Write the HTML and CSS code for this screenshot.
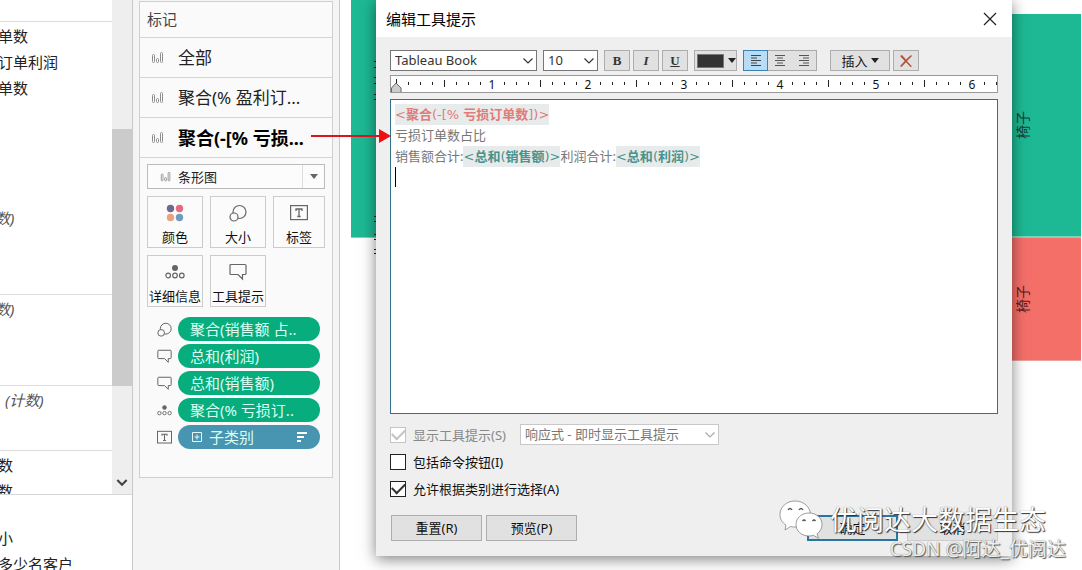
FILE: index.html
```html
<!DOCTYPE html>
<html lang="zh-CN">
<head>
<meta charset="utf-8">
<title>编辑工具提示</title>
<link rel="stylesheet" href="styles.css">
</head>
<body>
<svg class="defs" aria-hidden="true">
  <symbol id="bars" viewBox="0 0 14 14"><g fill="#fff" stroke="#8c8c8c"><rect x="1.500" y="3.500" width="2" height="8" rx="1"/><rect x="5.500" y="7.500" width="2" height="4" rx="1"/><rect x="9.500" y="1.500" width="2" height="10" rx="1"/></g></symbol>
  <symbol id="size" viewBox="0 0 18 18"><g fill="#fafafa" stroke="#666" stroke-width="1.200"><circle cx="10.500" cy="8" r="6.500"/><circle cx="5" cy="13" r="4"/></g></symbol>
  <symbol id="label" viewBox="0 0 18 18"><rect x=".6" y="1.600" width="16.800" height="14" fill="none" stroke="#666" stroke-width="1.200"/><path d="M6 7V5h6v2M9 5v7.500M7.300 12.500h3.400" fill="none" stroke="#666" stroke-width="1.300"/></symbol>
  <symbol id="detail" viewBox="0 0 20 18"><circle cx="10" cy="5" r="3" fill="#666"/><g fill="none" stroke="#666" stroke-width="1.200"><circle cx="3.200" cy="12.500" r="2.300"/><circle cx="10" cy="12.500" r="2.300"/><circle cx="16.800" cy="12.500" r="2.300"/></g></symbol>
  <symbol id="tip" viewBox="0 0 18 18"><path d="M2 1.500h14q1 0 1 1v8q0 1-1 1h-2.500v4.500l-4.500-4.500H2q-1 0-1-1v-8q0-1 1-1z" fill="none" stroke="#666" stroke-width="1.200"/></symbol>
  <symbol id="chev" viewBox="0 0 12 12"><path d="M1.500 3.500 6 8l4.500-4.500" fill="none" stroke="currentColor" stroke-width="1.200"/></symbol>
</svg>
<div class="app">
  <aside class="data">
    <div class="scroll">
      <div class="fields">
        <div class="group g-top"></div>
        <div class="group g-main"><p>单数</p><p>订单利润</p><p>单数</p><p class="calc gap">数)</p></div>
        <div class="group g-mid"><p class="calc">数)</p></div>
        <div class="group g-low"><p class="calc indent">(计数)</p></div>
        <div class="group g-end"><p>数</p><p>数</p></div>
      </div>
      <div class="bar"><div class="thumb"></div><svg width="14" height="14" viewBox="0 0 12 12"><path d="M2 3.500 6 7.500l4-4" fill="none" stroke="#444" stroke-width="1.800"/></svg></div>
    </div>
    <div class="params"><p>小</p><p>多少名客户</p></div>
  </aside>

  <section class="shelf">
    <div class="card">
      <h2>标记</h2>
      <div class="layer"><svg><use href="#bars"/></svg><span>全部</span></div>
      <div class="layer"><svg><use href="#bars"/></svg><span>聚合(% 盈利订...</span></div>
      <div class="layer current"><svg><use href="#bars"/></svg><span>聚合(-[% 亏损...</span></div>
      <div class="marks">
        <button class="type"><svg class="mini"><use href="#bars"/></svg><span>条形图</span><i class="drop"><b class="tri"></b></i></button>
        <div class="tiles">
          <button><svg viewBox="0 0 20 18"><circle cx="5.500" cy="4.500" r="3.700" fill="#70688f"/><circle cx="14.500" cy="4.500" r="3.700" fill="#e46a80"/><circle cx="5.500" cy="13.500" r="3.700" fill="#eca27c"/><circle cx="14.500" cy="13.500" r="3.700" fill="#6d9db8"/></svg>颜色</button>
          <button><svg><use href="#size"/></svg>大小</button>
          <button><svg><use href="#label"/></svg>标签</button>
          <button><svg><use href="#detail"/></svg>详细信息</button>
          <button><svg><use href="#tip"/></svg>工具提示</button>
        </div>
        <div class="pills">
          <div><svg><use href="#size"/></svg><button>聚合(销售额 占..</button></div>
          <div><svg><use href="#tip"/></svg><button>总和(利润)</button></div>
          <div><svg><use href="#tip"/></svg><button>总和(销售额)</button></div>
          <div><svg><use href="#detail"/></svg><button>聚合(% 亏损订..</button></div>
          <div><svg><use href="#label"/></svg><button class="dim"><svg width="10" height="10" viewBox="0 0 10 10"><path d="M.5.5h9v9h-9zM5 2.500v5M2.500 5h5" fill="none" stroke="#e8f6fb"/></svg><span>子类别</span><svg class="sort" width="12" height="12" viewBox="0 0 12 12"><path d="M1 2h10M1 6h7M1 10h4" stroke="#fff" stroke-width="2"/></svg></button></div>
        </div>
      </div>
    </div>
  </section>

  <main class="chart">
    <div class="column left"><div class="good"><svg width="3" height="196" viewBox="0 0 3 196"><path d="M1.500 1v1M1.500 7v1M1.500 17v1M1.500 23v1M1.500 34v1M1.500 39v1M1.500 156v1M1.500 161v1M1.500 174v1M1.500 179v1M1.500 189v1M1.500 193v1" stroke="#222" stroke-width="3"/></svg></div></div>
    <div class="column right"><div class="good"><span>椅子</span></div><div class="bad"><span>椅子</span></div></div>
  </main>
</div>

<div class="dialog" role="dialog" aria-labelledby="title">
  <header><h1 id="title">编辑工具提示</h1><button class="close" aria-label="关闭"><svg width="14" height="14" viewBox="0 0 14 14"><path d="m1 1 12 12M13 1 1 13" stroke="#222" stroke-width="1.200"/></svg></button></header>
  <div class="content">
    <div class="tools">
      <div class="pick font"><select aria-label="字体"><option>Tableau Book</option></select><svg><use href="#chev"/></svg></div>
      <div class="pick points"><select aria-label="字号"><option>10</option></select><svg><use href="#chev"/></svg></div>
      <div class="styles"><button class="serif">B</button><button class="serif it">I</button><button class="serif un">U</button></div>
      <button class="color" aria-label="颜色"><i></i><b class="tri"></b></button>
      <div class="align">
        <button class="on" aria-label="左对齐"><svg width="12" height="11" viewBox="0 0 12 11"><path d="M1 .5h10M1 3h6M1 5.500h10M1 8h6M1 10.500h10" stroke="#444"/></svg></button>
        <button aria-label="居中"><svg width="12" height="11" viewBox="0 0 12 11"><path d="M1 .5h10M3 3h6M1 5.500h10M3 8h6M1 10.500h10" stroke="#555"/></svg></button>
        <button aria-label="右对齐"><svg width="12" height="11" viewBox="0 0 12 11"><path d="M1 .5h10M5 3h6M1 5.500h10M5 8h6M1 10.500h10" stroke="#555"/></svg></button>
      </div>
      <button class="insert">插入 <b class="tri"></b></button>
      <button class="clear" aria-label="清除"><svg width="14" height="14" viewBox="0 0 14 14"><path d="M1 2 3 1l4 4.500L12 1l1 1-5 5 5 5.500-1.500.5L7 8.300 2.500 13 1 12l4.700-5z" fill="#b5543f"/></svg></button>
    </div>
    <svg class="ruler" aria-hidden="true">
      <defs><pattern id="ticks" x="5" width="96" height="18" patternUnits="userSpaceOnUse"><path d="M12.500 6v3M24.500 6v3M36.500 6v3M60.500 6v3M72.500 6v3M84.500 6v3M48.500 4v7" stroke="#222"/></pattern></defs>
      <rect x="5" width="100%" height="17" fill="url(#ticks)"/>
      <path d="M5.500 3v4" stroke="#222"/>
      <g text-anchor="middle"><text x="101" y="13">1</text><text x="197" y="13">2</text><text x="293" y="13">3</text><text x="389" y="13">4</text><text x="485" y="13">5</text><text x="581" y="13">6</text></g>
      <path d="M.5 17.500V12L5 7l5 5v5.500z" fill="#ccc" stroke="#666"/>
    </svg>
    <div class="editor" role="textbox" contenteditable="true" aria-label="工具提示内容">
      <p><span class="field red">&lt;<b>聚合</b>(-[% <b>亏损订单数</b>])&gt;</span></p>
      <p>亏损订单数占比</p>
      <p>销售额合计:<span class="field teal">&lt;<b>总和</b>(<b>销售额</b>)&gt;</span>利润合计:<span class="field teal">&lt;<b>总和</b>(<b>利润</b>)&gt;</span></p>
      <p class="caret"></p>
    </div>
    <div class="options">
      <div class="line"><label class="off"><input type="checkbox" checked disabled>显示工具提示(S)</label><div class="pick mode"><select aria-label="显示方式" disabled><option>响应式 - 即时显示工具提示</option></select><svg><use href="#chev"/></svg></div></div>
      <label><input type="checkbox">包括命令按钮(I)</label>
      <label><input type="checkbox" checked>允许根据类别进行选择(A)</label>
    </div>
    <footer><button>重置(R)</button><button>预览(P)</button><button class="ok">确定</button><button class="cancel">取消</button></footer>
  </div>
</div>

<svg class="arrow" width="80" height="16" viewBox="0 0 80 16"><path d="M0 8h70" stroke="#d9161c" stroke-width="2"/><path d="M68 1 80 8 68 15z" fill="#ee1111"/></svg>

<div class="mark">
  <svg width="44" height="40" viewBox="0 0 44 40"><g fill="#fff" stroke="#777" stroke-width=".7"><path d="M16 1C7.500 1 1 7 1 14.500c0 4.500 2 8 6 10.500l-1 5 5.500-3.500c1.500.5 3 .5 4.500.5 9 0 15.500-5.500 15.500-12.500S25 1 16 1z"/><path d="M30 13c-7.500 0-13 5-13 11.500S22.500 36 30 36c1.500 0 3-.2 4.500-.7l5 3-1.500-4.500c3-2 5-5.500 5-9.300C43 18 37.500 13 30 13z"/></g><g fill="none" stroke="#555" stroke-width="1.300"><path d="M9 10q2-3 4 0M20 10q2-3 4 0M23.500 21q1.500-2 3 0M33.500 21q1.500-2 3 0"/></g></svg>
  <span>优阅达大数据生态</span>
</div>
<div class="credit">CSDN @阿达_优阅达</div>
</body>
</html>
```
FILE: styles.css
```css
* { box-sizing: border-box; }
body, p, h1, h2 { margin: 0; font-weight: 400; }
body {
  background: #fff;
  color: #222;
  font: 15px/26px "Noto Sans", "Noto Sans CJK SC", sans-serif;
  overflow: hidden;
  position: relative;
  min-height: 100vh;
}
button, select, input { font: inherit; color: inherit; margin: 0; padding: 0; }
button { border: 1px solid #adadad; background: #e1e1e1; white-space: nowrap; }
svg { display: block; flex: none; }
.defs { position: absolute; width: 0; height: 0; }
.tri { border: 4px solid transparent; border-top: 5px solid #222; border-bottom: 0; width: 0; height: 0; flex: none; }

.app { display: flex; height: 100vh; }

.data { width: 133px; flex: none; border-right: 1px solid #c8c8c8; display: flex; flex-direction: column; overflow: hidden; }
.data p { white-space: nowrap; font-size: 15px; line-height: 26px; margin-left: -2px; }
.scroll { display: flex; flex: none; height: 495px; border-bottom: 1px solid #d6d6d6; overflow: hidden; }
.fields { flex: 1; }
.group { border-bottom: 1px solid #dcdcdc; padding-top: 1px; }
.g-top { height: 22px; }
.g-main { height: 273px; }
.g-mid { height: 91px; }
.g-low { height: 65px; }
.g-end { border: 0; }
.data .calc { font-style: italic; color: #555; margin-left: -5px; }
.data .gap { margin-top: 104px; }
.data .indent { padding-left: 10px; }
.bar { width: 20px; background: #eee; display: flex; flex-direction: column; justify-content: space-between; align-items: center; padding: 129px 0 4px; }
.thumb { width: 100%; height: 257px; background: #cbcbcb; }
.params { padding-top: 30px; }

.shelf { width: 207px; flex: none; background: #f4f4f4; border-right: 1px solid #c9c9c9; padding: 1px 6px; }
.card { min-height: 477px; background: #fafafa; border: 1px solid #d0d0d0; }
.card h2 { height: 35px; padding-left: 7px; font-size: 15px; line-height: 35px; color: #444; }
.layer { height: 40px; border-top: 1px solid #d4d4d4; display: flex; align-items: center; gap: 13px; padding-left: 11px; font-size: 17px; }
.layer svg { width: 14px; height: 14px; }
.layer span { white-space: nowrap; }
.current { font-weight: 700; font-size: 18px; color: #000; }
.marks { border-top: 1px solid #d4d4d4; padding: 6px 7px; }
.type { width: 100%; height: 25px; display: flex; align-items: center; gap: 6px; padding-left: 12px; border-color: #bbb; background: #fcfcfc; font-size: 13px; line-height: 20px; }
.mini { width: 12px; height: 12px; }
.drop { margin-left: auto; width: 22px; align-self: stretch; border-left: 1px solid #ddd; display: grid; place-content: center; }
.drop .tri { border-top-color: #666; }
.tiles { display: grid; grid-template-columns: 56px 56px 52px; gap: 7px; margin-top: 7px; }
.tiles button { height: 52px; display: flex; flex-direction: column; align-items: center; gap: 5px; padding-top: 7px; border-color: #ccc; background: #fbfbfb; font-size: 13px; line-height: 20px; color: #111; }
.tiles svg { width: 20px; height: 18px; }
.pills { display: flex; flex-direction: column; gap: 3px; margin-top: 10px; padding: 0 5px 0 10px; }
.pills div { display: flex; align-items: center; gap: 6px; }
.pills div > svg { width: 15px; height: 15px; }
.pills button { flex: 1; height: 24px; border: 0; border-radius: 12px; background: #08ad7d; color: #dcfff3; padding: 0 12px; font-size: 15px; line-height: 24px; text-align: left; }
.pills .dim { background: #4795b0; display: flex; align-items: center; gap: 7px; padding-left: 14px; }
.sort { margin-left: auto; }

.chart { flex: 1; display: flex; justify-content: space-between; padding-left: 11px; padding-right: 1px; }
.left { width: 28px; }
.right { width: 84px; padding-top: 14px; }
.good { background: #1db994; height: 223px; border-bottom: 1px solid #7dd5bd; }
.left .good { height: 238px; padding: 60px 0 0 23px; }
.bad { background: #f56f69; height: 124px; border: 1px solid #e9a39d; border-left: 0; border-right: 0; }
.right > div { display: flex; align-items: center; padding-left: 16px; }
.right span { writing-mode: vertical-rl; text-orientation: sideways; transform: rotate(180deg); font-size: 14px; line-height: 20px; color: #183c34; }
.right .bad span { color: #57201d; }

.dialog { position: absolute; left: 376px; right: 70px; top: 0; background: #efefef; box-shadow: 0 3px 14px rgba(0, 0, 0, .5); font-size: 13px; line-height: 20px; color: #111; }
.dialog header { display: flex; justify-content: space-between; align-items: center; height: 37px; background: #fff; padding: 0 14px 0 10px; }
.dialog h1 { font-size: 15px; line-height: 22px; color: #000; }
.close { border: 0; background: none; padding: 1px; }
.content { padding: 13px 14px 15px; display: flex; flex-direction: column; }
.tools { display: flex; height: 21px; }
.tools button { height: 21px; display: grid; place-content: center; }
.pick { display: grid; align-items: center; color: #333; }
.pick select, .pick svg { grid-area: 1 / 1; }
.pick select { appearance: none; width: 100%; height: 21px; border: 1px solid #777; border-radius: 0; background: #fff; padding-left: 4px; line-height: 19px; opacity: 1; }
.pick svg { width: 12px; height: 12px; justify-self: end; margin-right: 3px; pointer-events: none; }
.font { width: 147px; margin-right: 6px; }
.points { width: 55px; margin-right: 6px; }
.styles { display: flex; gap: 3px; margin-right: 6px; }
.styles button { width: 26px; }
.tools .serif { font: 700 13px/18px "Liberation Serif", serif; color: #333; }
.tools .it { font-style: italic; }
.tools .un { text-decoration: underline; }
.tools .color { display: flex; align-items: center; gap: 4px; width: 43px; padding-left: 2px; margin-right: 6px; }
.color i { width: 27px; height: 14px; background: #333; border: 1px solid #777; }
.align { display: flex; border: 1px solid #aaa; margin-right: 13px; }
.align button { width: 24px; height: 19px; border: 0; }
.align .on { width: 25px; height: 21px; margin: -1px 0 0 -1px; background: #b8dcf6; border: 1px solid #3b83b3; }
.tools .insert { display: flex; align-items: center; justify-content: center; gap: 3px; width: 60px; margin-right: 3px; }
.clear { width: 26px; }
.ruler { width: 100%; height: 18px; margin-top: 4px; background: #fff; border: 1px solid #999; overflow: hidden; }
.ruler text { font: 12px "Noto Sans", sans-serif; fill: #111; }
.editor { height: 315px; margin-top: 6px; background: #fff; border: 1px solid #2f7186; padding: 4px; line-height: 21px; color: #777; outline: 0; }
.editor p { height: 21px; white-space: nowrap; }
.field { display: inline-block; height: 21px; background: #e8ebeb; font-family: "DejaVu Sans", "Noto Sans CJK SC", sans-serif; }
.red { color: #e07b77; }
.teal { color: #4a938c; }
.editor .caret::before { content: ""; display: block; width: 1px; height: 20px; background: #000; }
.options { display: flex; flex-direction: column; gap: 6px; margin-top: 10px; }
.line { display: flex; align-items: center; gap: 14px; }
.options label { display: flex; align-items: center; gap: 7px; height: 21px; }
.options .off { color: #888; }
input[type="checkbox"] { appearance: none; width: 16px; height: 16px; border: 1px solid #222; background: #fff; display: grid; place-content: center; }
input[type="checkbox"]:checked::before { content: ""; width: 11px; height: 6px; border: solid #333; border-width: 0 0 2px 2px; transform: translateY(-2px) rotate(-45deg); }
input[type="checkbox"]:disabled { border-color: #c4c4c4; }
input[type="checkbox"]:disabled::before { border-color: #c4c4c4; }
.mode { width: 199px; color: #aaa; }
.mode select { border-color: #c8c8c8; color: #777; }
.dialog footer { display: flex; gap: 4px; margin-top: 16px; padding-left: 1px; }
.dialog footer button { width: 91px; height: 26px; }
.dialog footer .ok { margin-left: auto; border: 2px solid #2875a0; }
.dialog footer .cancel { margin-left: 5px; border-color: #ccc; }

.arrow { position: absolute; left: 311px; top: 128px; }
.mark { position: absolute; right: 36px; top: 500px; display: flex; align-items: center; gap: 7px; font-size: 27px; line-height: 40px; color: #fff; text-shadow: 1px 1px 1px #333, 0 0 1px #666; white-space: nowrap; }
.credit { position: absolute; right: 16px; top: 537px; font-size: 19px; line-height: 24px; color: #eee; text-shadow: 1px 1px 1px #555, 0 0 1px #777; white-space: nowrap; }
```
